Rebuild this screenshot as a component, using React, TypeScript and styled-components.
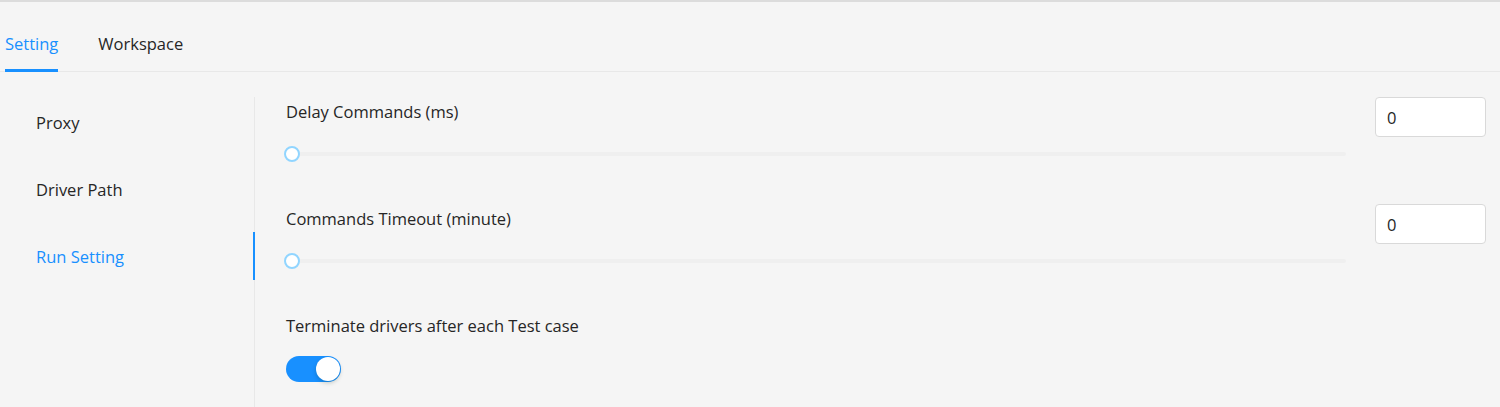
import styled, { createGlobalStyle } from "styled-components";

const GlobalStyle = createGlobalStyle`
  html, body {
    margin: 0;
    padding: 0;
    background: #f5f5f5;
  }
  body {
    font-family: "Open Sans", "Noto Sans", sans-serif;
    font-size: 16.5px;
    color: #262626;
  }
`;

const Page = styled.div`
  border-top: 2px solid #dcdcdc;
  min-height: 100vh;
  box-sizing: border-box;
  display: flex;
  flex-direction: column;
`;

const TabBar = styled.div`
  display: flex;
  gap: 40px;
  padding-left: 5px;
  height: 69px;
  border-bottom: 1px solid #e8e8e8;
`;

const Tab = styled.div<{ active?: boolean }>`
  display: flex;
  align-items: center;
  padding-top: 16px;
  color: ${(p) => (p.active ? "#1890ff" : "#262626")};
  border-bottom: 3px solid ${(p) => (p.active ? "#1890ff" : "transparent")};
  margin-bottom: -1px;
  cursor: pointer;
`;

const Body = styled.div`
  display: flex;
  flex: 1;
  padding-top: 25px;
`;

const Menu = styled.div`
  width: 254px;
  border-right: 1px solid #e8e8e8;
  padding-top: 1px;
  display: flex;
  flex-direction: column;
  gap: 19px;
`;

const MenuItem = styled.div<{ active?: boolean }>`
  height: 48px;
  display: flex;
  align-items: center;
  padding-left: 36px;
  margin-right: -1px;
  color: ${(p) => (p.active ? "#1890ff" : "#262626")};
  border-right: 2px solid ${(p) => (p.active ? "#1890ff" : "transparent")};
`;

const Content = styled.div`
  flex: 1;
  padding: 0 14px 0 31px;
  display: flex;
  flex-direction: column;
`;

const Row = styled.div`
  display: flex;
  align-items: flex-start;
  gap: 29px;
  margin-bottom: 42px;
`;

const Field = styled.div`
  flex: 1;
  display: flex;
  flex-direction: column;
`;

const Label = styled.div`
  padding-top: 3px;
  line-height: 24px;
`;

const Slider = styled.div`
  position: relative;
  margin-top: 22px;
  height: 16px;
`;

const Rail = styled.div`
  position: absolute;
  left: 6px;
  right: 0;
  top: 6px;
  height: 4px;
  border-radius: 2px;
  background: #efefef;
`;

const Handle = styled.div`
  position: absolute;
  top: 0;
  width: 16px;
  height: 16px;
  margin-left: -2px;
  box-sizing: border-box;
  border-radius: 50%;
  border: 2px solid #91d5ff;
  background: #fff;
`;

const NumberInput = styled.input`
  width: 111px;
  height: 40px;
  box-sizing: border-box;
  border: 1px solid #d9d9d9;
  border-radius: 4px;
  background: #fff;
  padding: 0 11px;
  font: inherit;
  color: #262626;
  outline: none;
`;

const Switch = styled.div<{ on?: boolean }>`
  position: relative;
  margin-top: 18px;
  width: 55px;
  height: 26px;
  border-radius: 13px;
  background: ${(p) => (p.on ? "#1890ff" : "#bfbfbf")};
`;

const Knob = styled.div<{ on?: boolean }>`
  position: absolute;
  top: 1px;
  ${(p) => (p.on ? "right: 1px;" : "left: 1px;")}
  width: 24px;
  height: 24px;
  border-radius: 50%;
  background: #fff;
  box-shadow: 0 2px 4px rgba(0, 35, 11, 0.2);
`;

const SliderRow = ({ label, value }: { label: string; value: number }) => (
  <Row>
    <Field>
      <Label>{label}</Label>
      <Slider>
        <Rail />
        <Handle style={{ left: `${value}%` }} />
      </Slider>
    </Field>
    <NumberInput defaultValue={value} />
  </Row>
);

export default function App() {
  return (
    <>
      <GlobalStyle />
      <Page>
        <TabBar>
          <Tab active>Setting</Tab>
          <Tab>Workspace</Tab>
        </TabBar>
        <Body>
          <Menu>
            <MenuItem>Proxy</MenuItem>
            <MenuItem>Driver Path</MenuItem>
            <MenuItem active>Run Setting</MenuItem>
          </Menu>
          <Content>
            <SliderRow label="Delay Commands (ms)" value={0} />
            <SliderRow label="Commands Timeout (minute)" value={0} />
            <Field>
              <Label>Terminate drivers after each Test case</Label>
              <Switch on>
                <Knob on />
              </Switch>
            </Field>
          </Content>
        </Body>
      </Page>
    </>
  );
}
